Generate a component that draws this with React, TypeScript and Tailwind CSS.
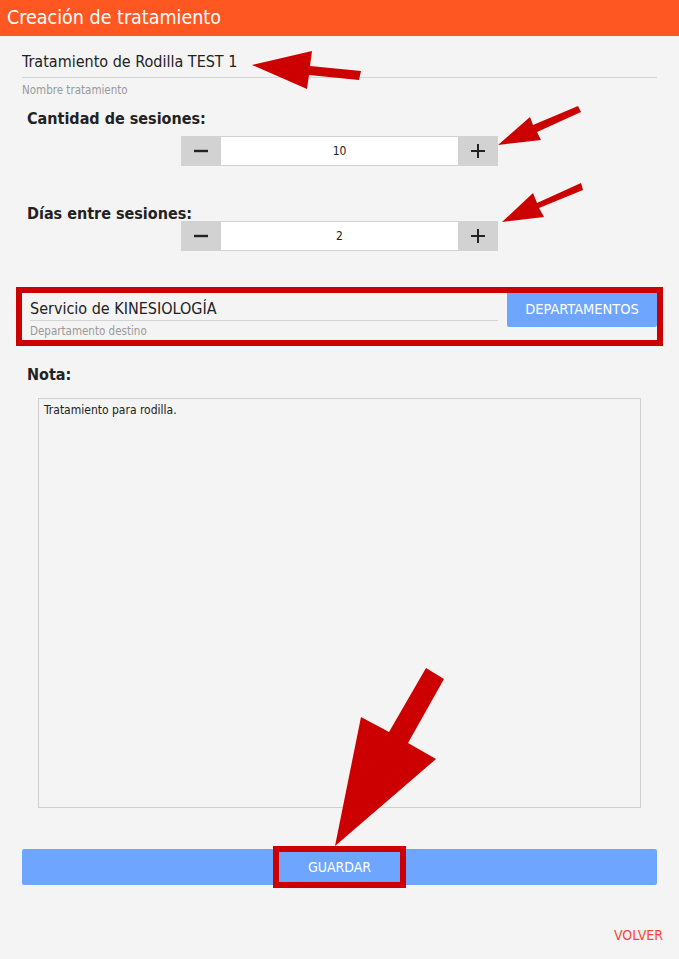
import type { ReactNode } from 'react';

const FONT = 'font-["DejaVu_Sans_Condensed","DejaVu_Sans",sans-serif]';

function Stepper({ value }: { value: string }) {
  return (
    <div className="mx-auto flex h-[30px] w-[317px]">
      <button className="flex w-[40px] items-center justify-center bg-[#d2d2d2]">
        <svg width="16" height="16" viewBox="0 0 16 16">
          <path d="M1 8h14" stroke="#222" strokeWidth="2.4" />
        </svg>
      </button>
      <div className="flex flex-1 items-center justify-center border-y border-[#d2d2d2] bg-white text-[12px] text-[#222]">
        {value}
      </div>
      <button className="flex w-[40px] items-center justify-center bg-[#d2d2d2]">
        <svg width="16" height="16" viewBox="0 0 16 16">
          <path d="M1 8h14M8 1v14" stroke="#222" strokeWidth="2" />
        </svg>
      </button>
    </div>
  );
}

function SectionLabel({ children }: { children: ReactNode }) {
  return <p className="ml-[5px] text-[16px] font-bold leading-[18px] text-[#222]">{children}</p>;
}

// red annotation arrows drawn over the form
function Arrows() {
  return (
    <svg className="pointer-events-none absolute left-0 top-0" width="679" height="959">
      <g fill="#cc0000">
        <polygon points="252,65 312,51 310,66 361,71 359,80 309,75 307,89" />
        <polygon points="498,145 530,117 533,125 578,106 581,112 537,132 541,140" />
        <polygon points="502,222 533,193 537,203 581,183 583,190 539,208 544,217" />
        <polygon points="335,846 361,717 389,732 426,668 444,679 408,743 436,759" />
      </g>
    </svg>
  );
}

export default function App() {
  return (
    <div className={`relative min-h-[959px] w-full bg-[#f4f4f4] ${FONT}`}>
      {/* Header */}
      <div className="flex h-[36px] items-center bg-[#ff5722] px-[7px] text-[19.5px] text-white">
        Creación de tratamiento
      </div>

      <div className="flex flex-col px-[22px]">
        {/* Nombre tratamiento */}
        <div className="flex h-[42px] items-end border-b border-[#d4d4d4] pb-[6px] text-[16px] leading-[18px] text-[#222]">
          Tratamiento de Rodilla TEST 1
        </div>
        <p className="mt-[5px] text-[11.5px] leading-[14px] text-[#999]">Nombre tratamiento</p>

        <div className="mt-[13px]">
          <SectionLabel>Cantidad de sesiones:</SectionLabel>
        </div>
        <div className="mt-[8px]">
          <Stepper value="10" />
        </div>

        <div className="mt-[39px]">
          <SectionLabel>Días entre sesiones:</SectionLabel>
        </div>
        <div className="-mt-[2px]">
          <Stepper value="2" />
        </div>

        {/* Departamento destino */}
        <div className="mt-[42px] flex h-[47px] gap-[9px] pl-[8px] outline-[6px] outline-[#cc0000]">
          <div className="flex flex-1 flex-col">
            <div className="mt-[7px] border-b border-[#d4d4d4] pb-[2px] text-[16px] leading-[18px] text-[#222]">
              Servicio de KINESIOLOGÍA
            </div>
            <p className="mt-[3px] text-[11.5px] leading-[14px] text-[#999]">Departamento destino</p>
          </div>
          <button className="h-[34px] w-[150px] rounded-b-[2px] bg-[#6ea6ff] text-[14.5px] text-white">
            DEPARTAMENTOS
          </button>
        </div>

        <div className="mt-[26px]">
          <SectionLabel>Nota:</SectionLabel>
        </div>

        <div className="mx-[16px] mt-[14px] h-[410px] border border-[#cfcfcf] px-[5px] py-[4px] text-[12px] leading-[15px] text-[#222]">
          Tratamiento para rodilla.
        </div>

        <button className="mt-[41px] flex h-[36px] items-center justify-center rounded-[2px] bg-[#6ea6ff] text-[14px] text-white">
          <span className="flex h-[30px] w-[121px] items-center justify-center outline-[6px] outline-[#cc0000]">
            GUARDAR
          </span>
        </button>

        <div className="mt-[40px] flex justify-end text-[14px] text-[#ff4433]">
          <span className="-mr-[6px]">VOLVER</span>
        </div>
      </div>

      <Arrows />
    </div>
  );
}
